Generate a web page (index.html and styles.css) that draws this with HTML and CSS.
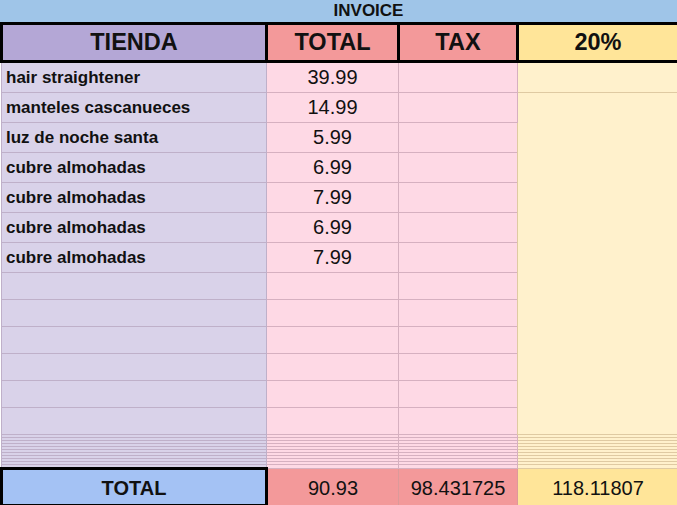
FILE: index.html
```html
<!DOCTYPE html>
<html>
<head>
<meta charset="utf-8">
<link rel="stylesheet" href="styles.css">
</head>
<body>
<div class="title">INVOICE</div>
<table class="sheet">
  <colgroup>
    <col class="c1"><col class="c2"><col class="c3"><col class="c4">
  </colgroup>
  <thead>
    <tr class="head">
      <th class="p-head">TIENDA</th>
      <th class="r-head">TOTAL</th>
      <th class="r-head">TAX</th>
      <th class="y-head">20%</th>
    </tr>
  </thead>
  <tbody>
    <tr class="row">
      <td class="p name">hair straightener</td><td class="k num">39.99</td><td class="k"></td><td class="y"></td>
    </tr>
    <tr class="row">
      <td class="p name">manteles cascanueces</td><td class="k num">14.99</td><td class="k"></td><td class="y y-merge" rowspan="12"></td>
    </tr>
    <tr class="row"><td class="p name">luz de noche santa</td><td class="k num">5.99</td><td class="k"></td></tr>
    <tr class="row"><td class="p name">cubre almohadas</td><td class="k num">6.99</td><td class="k"></td></tr>
    <tr class="row"><td class="p name">cubre almohadas</td><td class="k num">7.99</td><td class="k"></td></tr>
    <tr class="row"><td class="p name">cubre almohadas</td><td class="k num">6.99</td><td class="k"></td></tr>
    <tr class="row"><td class="p name">cubre almohadas</td><td class="k num">7.99</td><td class="k"></td></tr>
    <tr class="empty"><td class="p"></td><td class="k"></td><td class="k"></td></tr>
    <tr class="empty"><td class="p"></td><td class="k"></td><td class="k"></td></tr>
    <tr class="empty"><td class="p"></td><td class="k"></td><td class="k"></td></tr>
    <tr class="empty"><td class="p"></td><td class="k"></td><td class="k"></td></tr>
    <tr class="empty"><td class="p"></td><td class="k"></td><td class="k"></td></tr>
    <tr class="empty"><td class="p"></td><td class="k"></td><td class="k"></td></tr>
    <tr class="thin"><td class="p"></td><td class="k"></td><td class="k"></td><td class="y"></td></tr>
    <tr class="thin"><td class="p"></td><td class="k"></td><td class="k"></td><td class="y"></td></tr>
    <tr class="thin"><td class="p"></td><td class="k"></td><td class="k"></td><td class="y"></td></tr>
    <tr class="thin"><td class="p"></td><td class="k"></td><td class="k"></td><td class="y"></td></tr>
    <tr class="thin"><td class="p"></td><td class="k"></td><td class="k"></td><td class="y"></td></tr>
    <tr class="thin"><td class="p"></td><td class="k"></td><td class="k"></td><td class="y"></td></tr>
    <tr class="thin"><td class="p"></td><td class="k"></td><td class="k"></td><td class="y"></td></tr>
    <tr class="thin"><td class="p"></td><td class="k"></td><td class="k"></td><td class="y"></td></tr>
    <tr class="thin"><td class="p"></td><td class="k"></td><td class="k"></td><td class="y"></td></tr>
    <tr class="thin"><td class="p"></td><td class="k"></td><td class="k"></td><td class="y"></td></tr>
    <tr class="thin"><td class="p"></td><td class="k"></td><td class="k"></td><td class="y"></td></tr>
    <tr class="total">
      <td class="t-label">TOTAL</td>
      <td class="t-red">90.93</td>
      <td class="t-red">98.431725</td>
      <td class="t-yel">118.11807</td>
    </tr>
  </tbody>
</table>
</body>
</html>
```
FILE: styles.css
```css
html, body {
  margin: 0;
  padding: 0;
  background: #ffffff;
  overflow: hidden;
}
body {
  font-family: "Liberation Sans", Arial, sans-serif;
  color: #111;
  width: 677px;
  height: 505px;
}
.title {
  height: 22px;
  line-height: 22px;
  background: #9fc5e8;
  font-weight: bold;
  font-size: 17px;
  text-align: center;
  padding-left: 60px;
  box-sizing: border-box;
}
.sheet {
  width: 677px;
  table-layout: fixed;
  border-collapse: collapse;
}
.c1 { width: 265px; }
.c2 { width: 132px; }
.c3 { width: 119px; }
.c4 { width: 161px; }
.sheet td, .sheet th {
  padding: 0;
  border: 1px solid transparent;
}
.head th {
  height: 35px;
  border: 3px solid #000;
  font-size: 23.5px;
  font-weight: bold;
  text-align: center;
  vertical-align: middle;
}
.p-head { background: #b4a7d6; }
.r-head { background: #f3999a; }
.y-head { background: #ffe599; }

.row td { height: 29px; }
.empty td { height: 26px; }
.thin td { height: 2px; }

.p {
  background: #d9d2e9;
  border: 1px solid #bfb0c9 !important;
}
.k {
  background: #fed9e5;
  border: 1px solid #d6b0c0 !important;
}
.y {
  background: #fff1cc;
  border: 1px solid #dfcaa2 !important;
}
.thin td { font-size: 0; line-height: 0; }
.name {
  font-weight: bold;
  font-size: 17px;
  padding-left: 4px !important;
  white-space: nowrap;
  vertical-align: middle;
}
.num {
  font-size: 20px;
  text-align: center;
  vertical-align: middle;
}
.total td {
  height: 31px;
  font-size: 20px;
  text-align: center;
  vertical-align: middle;
  padding-top: 3px;
}
.t-label {
  background: #a4c2f4;
  border: 3px solid #000 !important;
  font-weight: bold;
  font-size: 20px !important;
}
.t-red {
  background: #f3999a;
  border: 1px solid #dc9a9a !important;
}
.t-yel {
  background: #ffe599;
  border: 1px solid #e6cf8a !important;
}
```
